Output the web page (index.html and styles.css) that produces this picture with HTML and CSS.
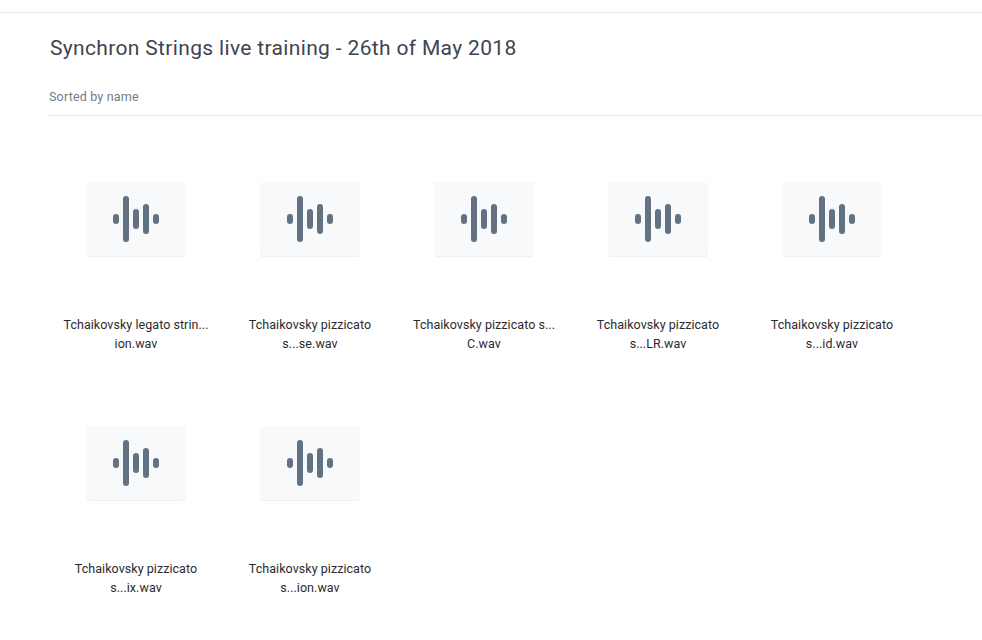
FILE: index.html
```html
<!DOCTYPE html>
<html lang="en">
<head>
    <meta charset="UTF-8">
    <meta name="viewport" content="width=device-width, initial-scale=1.0">
    <title>Synchron Strings live training - 26th of May 2018</title>
    <link rel="stylesheet" href="styles.css">
</head>
<body>
    <div class="folder">
        <h1 class="folder-title">Synchron Strings live training - 26th of May 2018</h1>
        <div class="sort-bar">Sorted by name</div>

        <!-- Audio files -->
        <div class="file-grid">
            <div class="file-item">
                <div class="file-thumb">
                    <svg class="wave-icon" viewBox="0 0 46 46"><path d="M3 21v4M13 3v40M23 16v14M33 11v24M43 21v4"/></svg>
                </div>
                <p class="file-name">Tchaikovsky legato strin...<br>ion.wav</p>
            </div>
            <div class="file-item">
                <div class="file-thumb">
                    <svg class="wave-icon" viewBox="0 0 46 46"><path d="M3 21v4M13 3v40M23 16v14M33 11v24M43 21v4"/></svg>
                </div>
                <p class="file-name">Tchaikovsky pizzicato<br>s...se.wav</p>
            </div>
            <div class="file-item">
                <div class="file-thumb">
                    <svg class="wave-icon" viewBox="0 0 46 46"><path d="M3 21v4M13 3v40M23 16v14M33 11v24M43 21v4"/></svg>
                </div>
                <p class="file-name">Tchaikovsky pizzicato s...<br>C.wav</p>
            </div>
            <div class="file-item">
                <div class="file-thumb">
                    <svg class="wave-icon" viewBox="0 0 46 46"><path d="M3 21v4M13 3v40M23 16v14M33 11v24M43 21v4"/></svg>
                </div>
                <p class="file-name">Tchaikovsky pizzicato<br>s...LR.wav</p>
            </div>
            <div class="file-item">
                <div class="file-thumb">
                    <svg class="wave-icon" viewBox="0 0 46 46"><path d="M3 21v4M13 3v40M23 16v14M33 11v24M43 21v4"/></svg>
                </div>
                <p class="file-name">Tchaikovsky pizzicato<br>s...id.wav</p>
            </div>
            <div class="file-item">
                <div class="file-thumb">
                    <svg class="wave-icon" viewBox="0 0 46 46"><path d="M3 21v4M13 3v40M23 16v14M33 11v24M43 21v4"/></svg>
                </div>
                <p class="file-name">Tchaikovsky pizzicato<br>s...ix.wav</p>
            </div>
            <div class="file-item">
                <div class="file-thumb">
                    <svg class="wave-icon" viewBox="0 0 46 46"><path d="M3 21v4M13 3v40M23 16v14M33 11v24M43 21v4"/></svg>
                </div>
                <p class="file-name">Tchaikovsky pizzicato<br>s...ion.wav</p>
            </div>
        </div>
    </div>
</body>
</html>
```

FILE: styles.css
```css
body {
    margin: 0;
    background-color: #ffffff;
    color: #2b2b2f;
    font-family: Roboto, "Liberation Sans", sans-serif;
    overflow: hidden;
}

.folder {
    margin-top: 12px;
    padding-left: 48px;
    border-top: 1px solid #e6e8ea;
}

.folder-title {
    margin: 0;
    padding: 21px 0 0 2px;
    color: #3d4550;
    font-size: 21px;
    font-weight: 400;
    line-height: 29px;
    letter-spacing: 0.34px;
}

.sort-bar {
    margin-top: 25px;
    padding: 0 0 9px 1px;
    border-bottom: 1px solid #e6e8ea;
    color: #737b87;
    font-size: 12.5px;
    line-height: 18px;
    letter-spacing: 0.18px;
}

.file-grid {
    display: grid;
    grid-template-columns: repeat(5, 174px);
    grid-auto-rows: 244px;
    padding: 66px 0 0 1px;
}

.file-item {
    display: flex;
    flex-direction: column;
    align-items: center;
}

.file-thumb {
    display: flex;
    align-items: center;
    justify-content: center;
    width: 100px;
    height: 74px;
    border-radius: 3px;
    background-color: #f8f9fa;
    box-shadow: 0 1px 0 #eef0f1;
}

.wave-icon {
    width: 46px;
    height: 46px;
    fill: none;
    stroke: #637282;
    stroke-width: 6px;
    stroke-linecap: round;
}

.file-name {
    margin: 59px 0 0;
    font-size: 12.5px;
    line-height: 19px;
    letter-spacing: 0.05px;
    text-align: center;
}
```
